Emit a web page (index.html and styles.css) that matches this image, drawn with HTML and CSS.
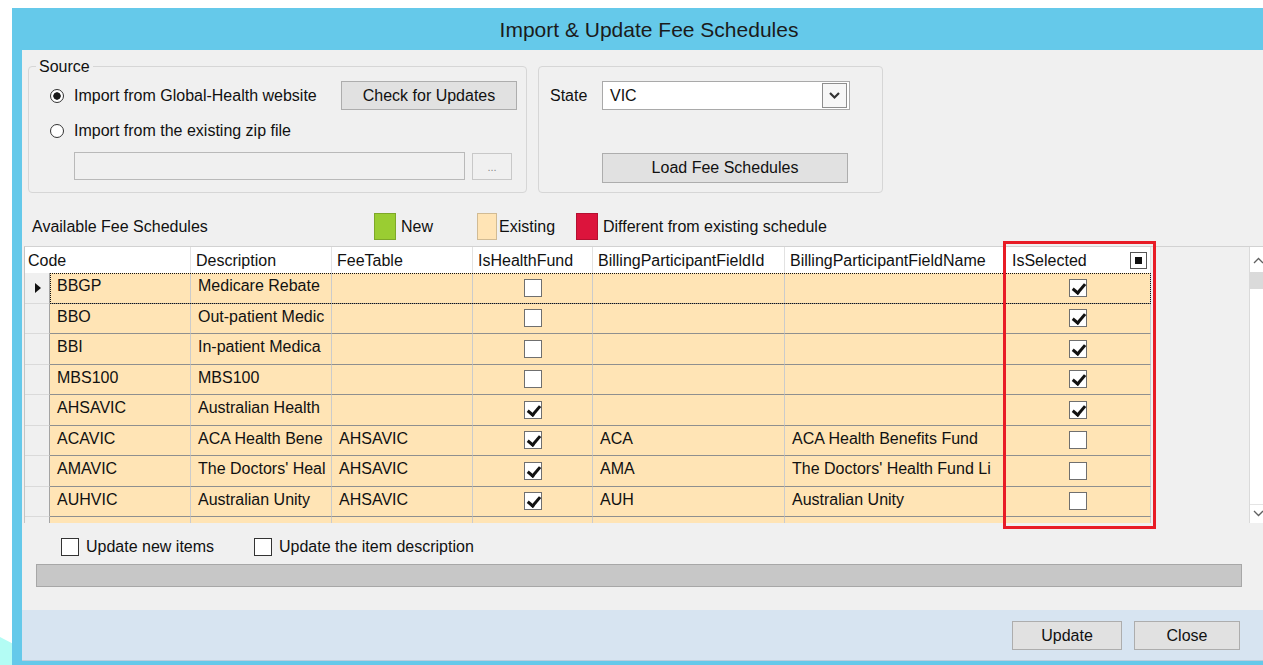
FILE: index.html
```html
<!DOCTYPE html>
<html lang="en">
<head>
<meta charset="utf-8">
<title>Import &amp; Update Fee Schedules</title>
<link rel="stylesheet" href="styles.css">
</head>
<body>
<div class="desktop">
  <div class="wedge"></div>
  <div class="window">
    <div class="titlebar">Import &amp; Update Fee Schedules</div>
    <div class="client">

      <div class="top">
        <div class="group source">
          <span class="group-title">Source</span>
          <div class="src-row">
            <label class="radio"><span class="dot checked"></span>Import from Global-Health website</label>
            <button class="btn check-btn">Check for Updates</button>
          </div>
          <div class="src-row second">
            <label class="radio"><span class="dot"></span>Import from the existing zip file</label>
          </div>
          <div class="file-row">
            <div class="textbox"></div>
            <button class="btn browse">...</button>
          </div>
        </div>

        <div class="group state">
          <div class="state-row">
            <span class="state-label">State</span>
            <div class="combo">
              <span>VIC</span>
              <span class="combo-arrow">
                <svg width="13" height="9" viewBox="0 0 13 9"><polyline points="2,2 6.5,6.5 11,2" fill="none" stroke="#333" stroke-width="2.2"/></svg>
              </span>
            </div>
          </div>
          <button class="btn load-btn">Load Fee Schedules</button>
        </div>
      </div>

      <div class="legend">
        <span class="legend-title">Available Fee Schedules</span>
        <span class="legend-item item-new"><span class="swatch sw-new"></span>New</span>
        <span class="legend-item item-existing"><span class="swatch sw-existing"></span>Existing</span>
        <span class="legend-item"><span class="swatch sw-diff"></span>Different from existing schedule</span>
      </div>

      <div class="grid-wrap">
        <div class="grid">
          <div class="grid-main">
            <div class="grid-head">
              <div class="hcell span2">Code</div>
              <div class="hcell">Description</div>
              <div class="hcell">FeeTable</div>
              <div class="hcell">IsHealthFund</div>
              <div class="hcell">BillingParticipantFieldId</div>
              <div class="hcell">BillingParticipantFieldName</div>
              <div class="hcell sel-head">IsSelected<span class="head-box"></span></div>
            </div>

            <div class="row current">
              <div class="rh"><span class="arrow"></span></div>
              <div class="cells">
                <div class="cell">BBGP</div><div class="cell">Medicare Rebate</div><div class="cell"></div>
                <div class="cell chk"><span class="cb"></span></div>
                <div class="cell"></div><div class="cell"></div>
                <div class="cell chk"><span class="cb on"></span></div>
              </div>
            </div>
            <div class="row">
              <div class="rh"></div>
              <div class="cells">
                <div class="cell">BBO</div><div class="cell">Out-patient Medic</div><div class="cell"></div>
                <div class="cell chk"><span class="cb"></span></div>
                <div class="cell"></div><div class="cell"></div>
                <div class="cell chk"><span class="cb on"></span></div>
              </div>
            </div>
            <div class="row">
              <div class="rh"></div>
              <div class="cells">
                <div class="cell">BBI</div><div class="cell">In-patient Medica</div><div class="cell"></div>
                <div class="cell chk"><span class="cb"></span></div>
                <div class="cell"></div><div class="cell"></div>
                <div class="cell chk"><span class="cb on"></span></div>
              </div>
            </div>
            <div class="row">
              <div class="rh"></div>
              <div class="cells">
                <div class="cell">MBS100</div><div class="cell">MBS100</div><div class="cell"></div>
                <div class="cell chk"><span class="cb"></span></div>
                <div class="cell"></div><div class="cell"></div>
                <div class="cell chk"><span class="cb on"></span></div>
              </div>
            </div>
            <div class="row">
              <div class="rh"></div>
              <div class="cells">
                <div class="cell">AHSAVIC</div><div class="cell">Australian Health</div><div class="cell"></div>
                <div class="cell chk"><span class="cb on"></span></div>
                <div class="cell"></div><div class="cell"></div>
                <div class="cell chk"><span class="cb on"></span></div>
              </div>
            </div>
            <div class="row">
              <div class="rh"></div>
              <div class="cells">
                <div class="cell">ACAVIC</div><div class="cell">ACA Health Bene</div><div class="cell">AHSAVIC</div>
                <div class="cell chk"><span class="cb on"></span></div>
                <div class="cell">ACA</div><div class="cell">ACA Health Benefits Fund</div>
                <div class="cell chk"><span class="cb"></span></div>
              </div>
            </div>
            <div class="row">
              <div class="rh"></div>
              <div class="cells">
                <div class="cell">AMAVIC</div><div class="cell">The Doctors' Heal</div><div class="cell">AHSAVIC</div>
                <div class="cell chk"><span class="cb on"></span></div>
                <div class="cell">AMA</div><div class="cell">The Doctors' Health Fund Li</div>
                <div class="cell chk"><span class="cb"></span></div>
              </div>
            </div>
            <div class="row">
              <div class="rh"></div>
              <div class="cells">
                <div class="cell">AUHVIC</div><div class="cell">Australian Unity</div><div class="cell">AHSAVIC</div>
                <div class="cell chk"><span class="cb on"></span></div>
                <div class="cell">AUH</div><div class="cell">Australian Unity</div>
                <div class="cell chk"><span class="cb"></span></div>
              </div>
            </div>
            <div class="row">
              <div class="rh"></div>
              <div class="cells">
                <div class="cell">CBHVIC</div><div class="cell">CBH Health Fund</div><div class="cell">AHSAVIC</div>
                <div class="cell chk"><span class="cb on"></span></div>
                <div class="cell">CBH</div><div class="cell">CBHS Health Fund Limited</div>
                <div class="cell chk"><span class="cb"></span></div>
              </div>
            </div>
          </div>

          <div class="vscroll">
            <div class="sb-btn sb-up">
              <svg width="11" height="7" viewBox="0 0 11 7"><polyline points="1,6 5.5,1.5 10,6" fill="none" stroke="#606060" stroke-width="1.3"/></svg>
            </div>
            <div class="sb-thumb"></div>
            <div class="sb-track"></div>
            <div class="sb-btn sb-down">
              <svg width="11" height="7" viewBox="0 0 11 7"><polyline points="1,1 5.5,5.5 10,1" fill="none" stroke="#606060" stroke-width="1.3"/></svg>
            </div>
          </div>
        </div>
        <div class="highlight"></div>
      </div>

      <div class="options">
        <label class="opt opt-new"><span class="box"></span>Update new items</label>
        <label class="opt"><span class="box"></span>Update the item description</label>
      </div>

      <div class="progress"></div>

      <div class="footer">
        <button class="btn foot-btn update-btn">Update</button>
        <button class="btn foot-btn close-btn">Close</button>
      </div>
    </div>
  </div>
</div>
</body>
</html>
```

FILE: styles.css
```css
* { box-sizing: border-box; }

html, body {
  margin: 0;
  padding: 0;
}

body {
  width: 1263px;
  height: 665px;
  overflow: hidden;
  background: #fff;
  font-family: "Liberation Sans", Arial, sans-serif;
  font-size: 16px;
  color: #111;
}

.desktop {
  position: relative;
  height: 665px;
  overflow: hidden;
}

/* sliver of desktop wallpaper at the bottom-left corner */
.wedge {
  position: absolute;
  left: 0;
  bottom: 0;
  width: 12px;
  height: 28px;
  background: #b3fcf4;
  clip-path: polygon(0 0, 100% 22%, 100% 100%, 0 100%);
}

/* ---------- window frame ---------- */
.window {
  margin: 8px 0 0 12px;
  width: 1274px;
  background: #65c9ea;
  padding: 0 10px 10px 10px;
}

.titlebar {
  height: 42px;
  display: flex;
  align-items: center;
  justify-content: center;
  font-size: 21px;
  color: #1b1b1b;
  padding-top: 1px;
}

.client {
  height: 611px;
  background: #f0f0f0;
  display: flex;
  flex-direction: column;
}

/* ---------- buttons ---------- */
.btn {
  font-family: inherit;
  font-size: 16px;
  color: #111;
  background: #e1e1e1;
  border: 1px solid #adadad;
  padding: 0;
  margin: 0;
}

/* ---------- group boxes ---------- */
.top {
  display: flex;
  gap: 11px;
  margin-top: 16px;
  padding-left: 6px;
  height: 127px;
}

.group {
  position: relative;
  border: 1px solid #d6d6d6;
  border-radius: 4px;
}

.group-title {
  position: absolute;
  top: -9px;
  left: 7px;
  padding: 0 3px 0 3px;
  line-height: 18px;
  background: #f0f0f0;
}

.source {
  width: 499px;
  padding: 14px 9px 0 21px;
}

.src-row {
  display: flex;
  align-items: center;
  justify-content: space-between;
  height: 29px;
}

.src-row.second {
  margin-top: 7px;
  height: 28px;
}

.radio {
  display: flex;
  align-items: center;
}

.dot {
  width: 14px;
  height: 14px;
  border: 1px solid #333;
  border-radius: 50%;
  background: #fff;
  margin-right: 10px;
}

.dot.checked {
  background: radial-gradient(circle, #1a1a1a 0 3.4px, #fff 4px);
}

.check-btn {
  width: 176px;
  height: 29px;
}

.file-row {
  display: flex;
  gap: 7px;
  margin-top: 7px;
  padding-left: 24px;
}

.textbox {
  width: 391px;
  height: 28px;
  background: #f0f0f0;
  border: 1px solid #b9b9b9;
}

.browse {
  width: 40px;
  height: 27px;
  margin-top: 1px;
  background: #f0f0f0;
  border-color: #c8c8c8;
  color: #8a8a8a;
  font-size: 11px;
}

.state {
  width: 345px;
  padding: 14px 0 0 11px;
}

.state-row {
  display: flex;
  align-items: center;
  height: 29px;
}

.state-label {
  width: 52px;
}

.combo {
  width: 248px;
  height: 29px;
  background: #fff;
  border: 1px solid #a9a9a9;
  display: flex;
  align-items: center;
  justify-content: space-between;
  padding: 0 2px 0 7px;
}

.combo-arrow {
  width: 25px;
  height: 25px;
  border: 1px solid #8e8e8e;
  background: #f7f7f7;
  display: flex;
  align-items: center;
  justify-content: center;
}

.load-btn {
  width: 246px;
  height: 30px;
  margin: 43px 0 0 52px;
}

/* ---------- colour legend ---------- */
.legend {
  display: flex;
  align-items: center;
  height: 27px;
  margin-top: 20px;
  padding-left: 10px;
}

.legend-title { width: 342px; }

.legend-item {
  display: flex;
  align-items: center;
}

.item-new { width: 103px; }
.item-existing { width: 99px; }

.swatch {
  width: 22px;
  height: 27px;
  margin-right: 5px;
  border: 1px solid rgba(0, 0, 0, 0.18);
}

.sw-new { background: #9acd32; }
.sw-existing {
  width: 20px;
  margin-right: 2px;
  background: #ffe4b5;
}
.sw-diff { background: #dc143c; }

/* ---------- data grid ---------- */
.grid-wrap {
  position: relative;
  height: 277px;
  margin: 6px 10px 0 2px;
}

.grid {
  display: flex;
  height: 100%;
  border-top: 1px solid #d2d2d2;
  border-left: 1px solid #c4c4c4;
  background: #f0f0f0;
}

.grid-main {
  flex: 1;
  overflow: hidden;
}

.grid-head {
  display: grid;
  grid-template-columns: 25px 141px 141px 141px 120px 192px 220px 146px;
  height: 26px;
}

.hcell {
  background: #fff;
  border-right: 1px solid #e2e2e2;
  display: flex;
  align-items: center;
  padding: 2px 0 0 5px;
  white-space: nowrap;
  overflow: hidden;
}

.hcell.span2 {
  grid-column: span 2;
  padding-left: 3px;
}

.sel-head {
  justify-content: space-between;
  padding-left: 7px;
  padding-right: 3px;
}

.head-box {
  width: 17px;
  height: 17px;
  margin-top: -2px;
  border: 1px solid #555;
  background: #fff;
  display: flex;
  align-items: center;
  justify-content: center;
}

.head-box::after {
  content: "";
  width: 7px;
  height: 7px;
  background: #111;
}

.row {
  display: flex;
  height: 30.5px;
}

.rh {
  width: 25px;
  flex: none;
  background: #f0f0f0;
  border-right: 1px solid #a4a4a4;
  border-bottom: 1px solid #dadada;
  display: flex;
  align-items: center;
  justify-content: center;
}

.arrow {
  width: 0;
  height: 0;
  border-left: 6px solid #111;
  border-top: 5px solid transparent;
  border-bottom: 5px solid transparent;
  margin-left: 2px;
}

.cells {
  display: grid;
  grid-template-columns: 141px 141px 141px 120px 192px 220px 146px;
  background: #ffe4b5;
}

.row.current .cells {
  outline: 1px dotted #111;
  outline-offset: -1px;
}

.cell {
  display: flex;
  align-items: center;
  padding: 0 0 3px 7px;
  border-right: 1px solid #cbcbcb;
  border-bottom: 1px solid #8f8f8f;
  white-space: nowrap;
  overflow: hidden;
}

.cell.chk {
  justify-content: center;
  padding: 0;
}

.cb {
  position: relative;
  width: 18px;
  height: 18px;
  background: #fff;
  border: 1px solid #6f6f6f;
}

.cb.on::after {
  content: "";
  position: absolute;
  left: 5px;
  top: 1px;
  width: 5px;
  height: 10px;
  border-right: 3px solid #111;
  border-bottom: 3px solid #111;
  transform: rotate(40deg);
}

.vscroll {
  width: 17px;
  flex: none;
  background: #fff;
  border-left: 1px solid #dadada;
  display: flex;
  flex-direction: column;
  padding-top: 1px;
}

.sb-btn {
  display: flex;
  align-items: center;
  justify-content: center;
}

.sb-up { height: 24px; }

.sb-thumb {
  height: 17px;
  background: #dadada;
}

.sb-track { flex: 1; }

.sb-down {
  height: 17px;
  margin-bottom: 2px;
  border-top: 1px solid #e4e4e4;
}

/* red frame drawn around the IsSelected column */
.highlight {
  position: absolute;
  left: 979px;
  top: -5px;
  width: 153px;
  height: 288px;
  border: 3px solid #e81c26;
  pointer-events: none;
}

/* ---------- options and progress ---------- */
.options {
  display: flex;
  align-items: center;
  height: 19px;
  margin-top: 14px;
  padding-left: 39px;
}

.opt {
  display: flex;
  align-items: center;
}

.opt-new { width: 193px; }

.box {
  width: 18px;
  height: 18px;
  background: #fff;
  border: 1px solid #333;
  margin-right: 7px;
}

.progress {
  height: 23px;
  margin: 8px 34px 0 14px;
  background: #c7c7c7;
  border: 1px solid #a7a7a7;
}

/* ---------- footer ---------- */
.footer {
  margin-top: auto;
  height: 51px;
  background: #d7e4f1;
  border-bottom: 1px solid #bccddd;
  display: flex;
  justify-content: flex-end;
  align-items: flex-start;
  gap: 12px;
  padding: 11px 36px 0 0;
}

.foot-btn { height: 29px; }
.update-btn { width: 110px; }
.close-btn { width: 106px; }
```
